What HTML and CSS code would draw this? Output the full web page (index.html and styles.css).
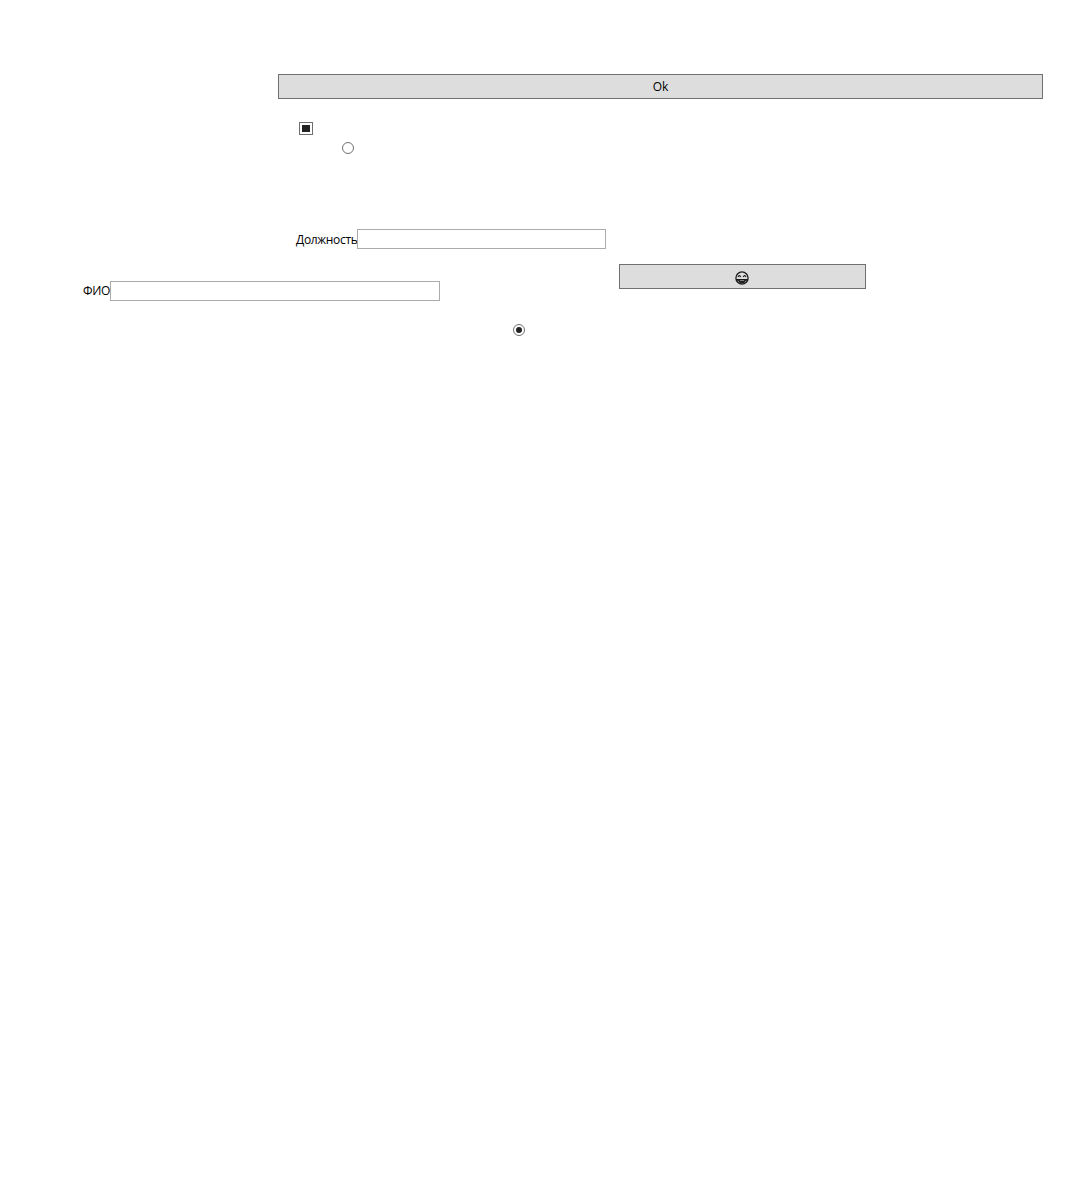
FILE: index.html
```html
<!DOCTYPE html>
<html lang="ru">
<head>
<meta charset="utf-8">
<title>Форма</title>
<link rel="stylesheet" href="styles.css">
</head>
<body>
<main class="page">
  <button class="btn btn-ok" type="button">Ok</button>
  <div class="check-row"><span class="check"><span class="check-mark"></span></span></div>
  <div class="radio-row-a"><span class="radio"></span></div>
  <div class="field field-post">
    <label class="label label-post">Должность</label>
    <span class="input input-post"></span>
  </div>
  <div class="mixed-row">
    <div class="field field-fio">
      <label class="label label-fio">ФИО</label>
      <span class="input input-fio"></span>
    </div>
    <button class="btn btn-emoji" type="button" aria-label="😂">
      <svg class="emoji" viewBox="0 0 14 14" width="14" height="14" aria-hidden="true">
        <circle cx="7" cy="7" r="6.1" fill="none" stroke="#1a1a1a" stroke-width="1.3"/>
        <path d="M3 6 Q4.3 3.2 5.8 6 M8.2 6 Q9.7 3.2 11 6" fill="none" stroke="#1a1a1a" stroke-width="1.2"/>
        <path d="M0.8 8 H13.2 L12.6 9.8 H10.9 Q10 12.4 7 12.4 Q4 12.4 3.1 9.8 H1.4 Z" fill="#1a1a1a"/>
        <path d="M4.8 9.6 H9.2" stroke="#9a9a9a" stroke-width="0.9"/>
      </svg>
    </button>
  </div>
  <div class="radio-row-b"><span class="radio radio-on"><span class="radio-dot"></span></span></div>
</main>
</body>
</html>
```
FILE: styles.css
```css
html, body {
  margin: 0;
  background: #fff;
}
.page {
  box-sizing: border-box;
  width: 1080px;
  height: 1178px;
  padding-top: 74px;
  font-family: "Open Sans", "Noto Sans", sans-serif;
  font-size: 12px;
  color: #000;
}
.btn {
  display: block;
  box-sizing: border-box;
  height: 25px;
  padding: 0;
  border: 1px solid #707070;
  border-radius: 0;
  background: #ddd;
  color: #000;
  font: inherit;
}
.btn-ok {
  width: 765px;
  margin-left: 278px;
}
.check-row {
  display: flex;
  margin: 23px 0 0 299px;
}
.check {
  box-sizing: border-box;
  display: flex;
  align-items: center;
  justify-content: center;
  width: 14px;
  height: 13px;
  border: 1px solid #6e6e6e;
}
.check-mark {
  width: 8px;
  height: 7px;
  background: #222;
}
.radio-row-a {
  display: flex;
  margin: 7px 0 0 342px;
}
.radio {
  box-sizing: border-box;
  display: flex;
  align-items: center;
  justify-content: center;
  width: 12px;
  height: 12px;
  border: 1px solid #707070;
  border-radius: 50%;
}
.radio-dot {
  width: 6px;
  height: 6px;
  border-radius: 50%;
  background: #222;
}
.field {
  display: flex;
  align-items: center;
  height: 20px;
}
.field-post {
  margin: 75px 0 0 296px;
}
.label {
  line-height: 20px;
  letter-spacing: -0.32px;
  white-space: nowrap;
}
.label-post {
  width: 61px;
  padding-top: 2px;
}
.label-fio {
  width: 27px;
}
.input {
  display: block;
  box-sizing: border-box;
  height: 20px;
  border: 1px solid #ababab;
  background: #fff;
}
.input-post {
  width: 249px;
}
.input-fio {
  width: 330px;
}
.mixed-row {
  display: flex;
  align-items: flex-start;
  margin-top: 15px;
}
.field-fio {
  margin: 17px 0 0 83px;
}
.btn-emoji {
  display: flex;
  align-items: center;
  justify-content: center;
  width: 247px;
  margin-left: 179px;
  padding: 3px 1px 0 0;
}
.emoji {
  display: block;
}
.radio-row-b {
  display: flex;
  margin: 23px 0 0 513px;
}
```
